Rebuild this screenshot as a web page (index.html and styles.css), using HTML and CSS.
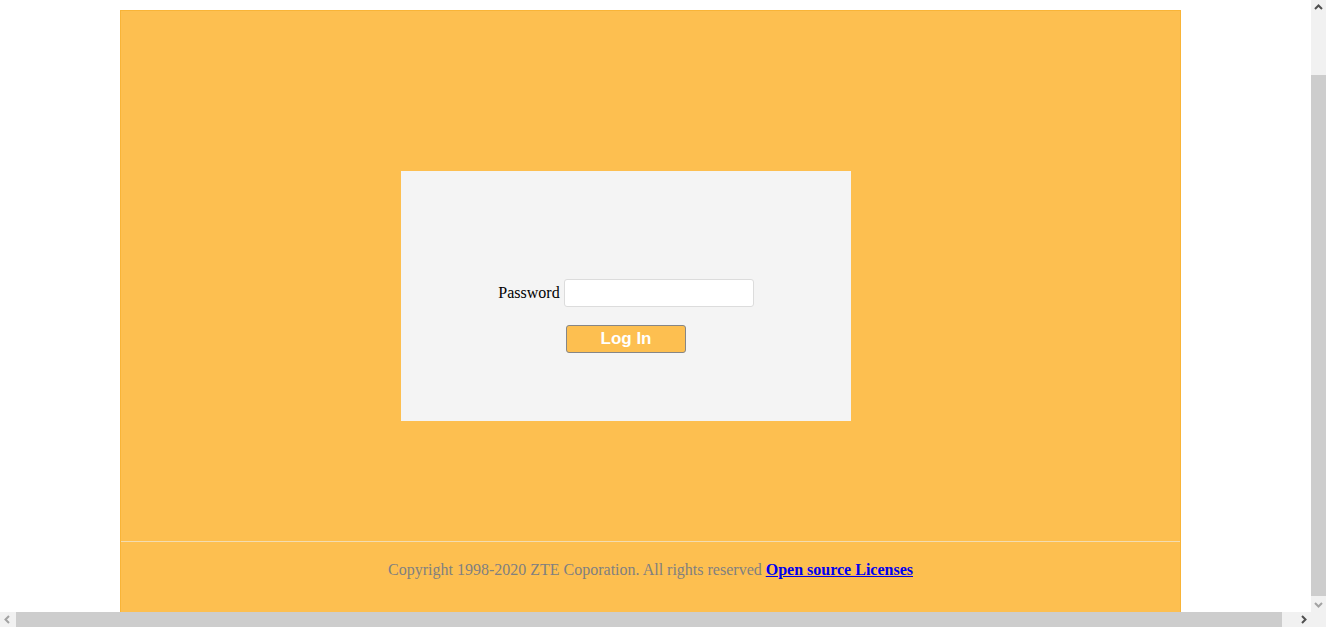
FILE: index.html
```html
<!DOCTYPE html>
<html>
<head>
<meta charset="utf-8">
<title>ZTE Login</title>
<link rel="stylesheet" href="styles.css">
</head>
<body>
<div class="frame">
  <div class="main">
    <div class="login">
      <div class="row">
        <label class="lbl" for="pw">Password</label>
        <input class="pw" id="pw" type="password">
      </div>
      <button class="btn" type="button">Log In</button>
    </div>
  </div>
  <div class="footer">
    <span class="copy">Copyright 1998-2020 ZTE Coporation. All rights reserved</span>
    <a class="lic" href="#">Open source Licenses</a>
  </div>
</div>

<div class="vbar">
  <div class="arrow up"><svg width="15" height="15" viewBox="0 0 15 15"><path d="M4 9 L7.5 5.5 L11 9" fill="none" stroke="#505050" stroke-width="2"/></svg></div>
  <div class="vthumb"></div>
  <div class="arrow down"><svg width="15" height="15" viewBox="0 0 15 15"><path d="M4 6 L7.5 9.5 L11 6" fill="none" stroke="#a3a3a3" stroke-width="2"/></svg></div>
</div>
<div class="hbar">
  <div class="arrow left"><svg width="15" height="15" viewBox="0 0 15 15"><path d="M9 4 L5.5 7.5 L9 11" fill="none" stroke="#a3a3a3" stroke-width="2"/></svg></div>
  <div class="hthumb"></div>
  <div class="arrow right"><svg width="15" height="15" viewBox="0 0 15 15"><path d="M6 4 L9.5 7.5 L6 11" fill="none" stroke="#505050" stroke-width="2"/></svg></div>
</div>
<div class="corner"></div>
</body>
</html>
```

FILE: styles.css
```css
html, body {
  margin: 0;
  padding: 0;
  overflow: hidden;
  background: #ffffff;
  font-family: "Liberation Serif", "Times New Roman", serif;
  font-size: 16px;
}

.frame {
  margin: 10px 0 0 120px;
  width: 1059px;
  border: 1px solid #f9b437;
  border-bottom: none;
  background: #fdbf50;
}

.main {
  height: 530px;
  padding-top: 160px;
  box-sizing: border-box;
}

.login {
  margin-left: 280px;
  width: 450px;
  height: 250px;
  background: #f4f4f4;
  box-sizing: border-box;
  padding-top: 108px;
  display: flex;
  flex-direction: column;
  align-items: center;
  gap: 18px;
}

.row {
  display: flex;
  align-items: center;
  gap: 4px;
  height: 28px;
}

.lbl {
  color: #000;
  font-size: 16px;
  line-height: 18px;
}

.pw {
  width: 190px;
  height: 28px;
  box-sizing: border-box;
  border: 1px solid #dcdcdc;
  border-radius: 3px;
  background: #fff;
  margin: 0;
  padding: 0 4px;
  outline: none;
}

.btn {
  width: 120px;
  height: 28px;
  box-sizing: border-box;
  margin: 0;
  padding: 0;
  background: #fdbf50;
  border: 1px solid #868686;
  border-radius: 3px;
  color: #ffffff;
  font-family: "Liberation Sans", Arial, sans-serif;
  font-weight: bold;
  font-size: 17px;
  line-height: 26px;
}

.footer {
  border-top: 1px solid #f3dcb0;
  height: 80px;
  box-sizing: border-box;
  padding-top: 19px;
  text-align: center;
  line-height: 18px;
}

.copy {
  color: #808080;
}

.lic {
  color: #0000ee;
  font-weight: bold;
  text-decoration: underline;
}

.vbar {
  position: fixed;
  top: 0;
  right: 0;
  width: 15px;
  height: 612px;
  background: #f1f1f1;
}

.vthumb {
  position: absolute;
  left: 0;
  top: 75px;
  width: 15px;
  height: 521px;
  background: #cdcdcd;
}

.hbar {
  position: fixed;
  left: 0;
  bottom: 0;
  width: 1311px;
  height: 15px;
  background: #f1f1f1;
}

.hthumb {
  position: absolute;
  top: 0;
  left: 16px;
  width: 1266px;
  height: 15px;
  background: #cdcdcd;
}

.arrow {
  position: absolute;
  width: 15px;
  height: 15px;
}

.arrow svg { display: block; }

.up { top: 0; left: 0; }
.down { bottom: 0; left: 0; }
.left { left: 0; top: 0; }
.right { right: 0; top: 0; }

.corner {
  position: fixed;
  right: 0;
  bottom: 0;
  width: 15px;
  height: 15px;
  background: #f1f1f1;
}
```
